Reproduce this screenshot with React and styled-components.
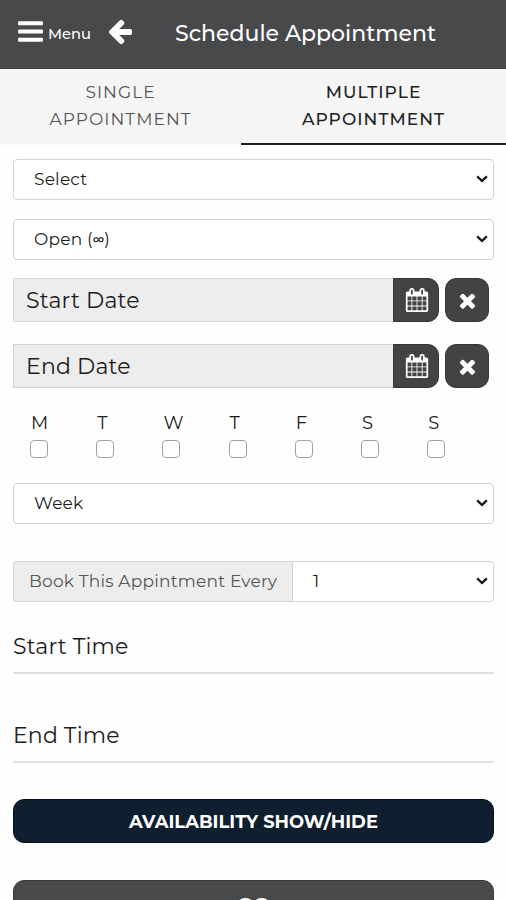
import React from "react";
import styled, { createGlobalStyle } from "styled-components";

const ICONS = {
  bars: "M1664 1344v128q0 26-19 45t-45 19h-1408q-26 0-45-19t-19-45v-128q0-26 19-45t45-19h1408q26 0 45 19t19 45zm0-512v128q0 26-19 45t-45 19h-1408q-26 0-45-19t-19-45v-128q0-26 19-45t45-19h1408q26 0 45 19t19 45zm0-512v128q0 26-19 45t-45 19h-1408q-26 0-45-19t-19-45v-128q0-26 19-45t45-19h1408q26 0 45 19t19 45z",
  arrow:
    "M1664 896v128q0 53-32.5 90.5t-84.5 37.5h-704l293 294q38 36 38 90t-38 90l-75 76q-37 37-90 37-52 0-91-37l-651-652q-37-37-37-90 0-52 37-91l651-650q38-38 91-38 52 0 90 38l75 74q38 38 38 91t-38 91l-293 293h704q52 0 84.5 37.5t32.5 90.5z",
  calendar:
    "M192 1664h288v-288h-288v288zm352 0h320v-288h-320v288zm-352-352h288v-320h-288v320zm352 0h320v-320h-320v320zm-352-384h288v-288h-288v288zm736 736h320v-288h-320v288zm-384-736h320v-288h-320v288zm768 736h288v-288h-288v288zm-384-352h320v-320h-320v320zm-352-864v-288q0-13-9.5-22.5t-22.5-9.5h-64q-13 0-22.5 9.5t-9.5 22.5v288q0 13 9.5 22.5t22.5 9.5h64q13 0 22.5-9.5t9.5-22.5zm736 864h288v-320h-288v320zm-384-384h320v-288h-320v288zm384 0h288v-288h-288v288zm32-480v-288q0-13-9.5-22.5t-22.5-9.5h-64q-13 0-22.5 9.5t-9.5 22.5v288q0 13 9.5 22.5t22.5 9.5h64q13 0 22.5-9.5t9.5-22.5zm384-64v1280q0 52-38 90t-90 38h-1408q-52 0-90-38t-38-90v-1280q0-52 38-90t90-38h128v-96q0-66 47-113t113-47h64q66 0 113 47t47 113v96h384v-96q0-66 47-113t113-47h64q66 0 113 47t47 113v96h128q52 0 90 38t38 90z",
  times:
    "M1490 1322q0 40-28 68l-136 136q-28 28-68 28t-68-28l-294-294-294 294q-28 28-68 28t-68-28l-136-136q-28-28-28-68t28-68l294-294-294-294q-28-28-28-68t28-68l136-136q28-28 68-28t68 28l294 294 294-294q28-28 68-28t68 28l136 136q28 28 28 68t-28 68l-294 294 294 294q28 28 28 68z",
};

const DAYS = ["M", "T", "W", "T", "F", "S", "S"];

function Icon({ name, size }) {
  return (
    <Glyph viewBox="0 0 1792 1792" width={size} height={size}>
      <path d={ICONS[name]} />
    </Glyph>
  );
}

function SelectField({ children, joined }) {
  return (
    <Select $joined={joined}>
      <span>{children}</span>
      <Chevron width="12" height="8" viewBox="0 0 12 8">
        <path d="M1.2 1.4 L6 6 L10.8 1.4" />
      </Chevron>
    </Select>
  );
}

function DateField({ label }) {
  return (
    <DateRow>
      <DateInput readOnly value={label} />
      <IconButton $attached aria-label="Pick date">
        <Icon name="calendar" size={24} />
      </IconButton>
      <IconButton aria-label="Clear date">
        <Icon name="times" size={23} />
      </IconButton>
    </DateRow>
  );
}

function App() {
  return (
    <Screen>
      <GlobalStyle />
      <Header>
        <MenuButton>
          <Icon name="bars" size={29} />
          <MenuText>Menu</MenuText>
        </MenuButton>
        <BackButton aria-label="Back">
          <Icon name="arrow" size={28} />
        </BackButton>
        <Title>Schedule Appointment</Title>
      </Header>
      <Tabs>
        <Tab>
          <span>Single</span>
          <span>Appointment</span>
        </Tab>
        <Tab $active>
          <span>Multiple</span>
          <span>Appointment</span>
        </Tab>
      </Tabs>
      <Form>
        <Selects>
          <SelectField>Select</SelectField>
          <SelectField>
            Open (<Infinity>∞</Infinity>)
          </SelectField>
        </Selects>
        <Dates>
          <DateField label="Start Date" />
          <DateField label="End Date" />
        </Dates>
        <Days>
          {DAYS.map((day, i) => (
            <Day key={i}>
              <DayName>{day}</DayName>
              <Checkbox type="checkbox" />
            </Day>
          ))}
        </Days>
        <SelectField>Week</SelectField>
        <Repeat>
          <Addon>Book This Appintment Every</Addon>
          <SelectField joined>1</SelectField>
        </Repeat>
        <Times>
          <TimeField>Start Time</TimeField>
          <TimeField>End Time</TimeField>
        </Times>
        <Actions>
          <Button $navy>AVAILABILITY SHOW/HIDE</Button>
          <Button $large>GO</Button>
        </Actions>
      </Form>
    </Screen>
  );
}

export default App;

const GlobalStyle = createGlobalStyle`
  * {
    box-sizing: border-box;
  }

  body {
    margin: 0;
    background: #fefefe;
    overflow: hidden;
  }

  body, button, input {
    font-family: Montserrat, Inter, sans-serif;
  }
`;

const Screen = styled.div`
  width: 100%;
  height: 900px;
  overflow: hidden;
  color: #1c1c1c;
`;

const Glyph = styled.svg`
  display: block;
  flex: none;
  fill: currentColor;
`;

const Header = styled.header`
  height: 69px;
  display: flex;
  align-items: center;
  padding: 0 0 4px 16px;
  background: #48494b;
  border-bottom: 1px solid #3b3c3e;
  color: #fff;
`;

const MenuButton = styled.button`
  display: flex;
  align-items: center;
  gap: 3px;
  width: 90px;
  padding: 0 0 1px;
  border: 0;
  background: none;
  color: inherit;
  font-size: 14.7px;
  font-weight: 500;
  white-space: nowrap;
`;

const MenuText = styled.span`
  padding-top: 5px;
`;

const BackButton = styled.button`
  padding: 0 0 2px;
  border: 0;
  background: none;
  color: inherit;
`;

const Title = styled.h1`
  margin: 0 0 0 41px;
  padding-top: 3px;
  font-size: 22px;
  font-weight: 500;
  white-space: nowrap;
`;

const Tabs = styled.nav`
  display: grid;
  grid-template-columns: 241px 1fr;
  height: 76px;
  background: #f5f5f5;
`;

const Tab = styled.button`
  display: flex;
  flex-direction: column;
  align-items: center;
  padding: 10px 0 0;
  border: 0;
  border-bottom: 2px solid ${(p) => (p.$active ? "#1d1e20" : "#f8f8f8")};
  background: none;
  color: ${(p) => (p.$active ? "#222" : "#555")};
  font-size: 17px;
  font-weight: ${(p) => (p.$active ? 500 : 400)};
  line-height: 27px;
  letter-spacing: 1.05px;
  text-transform: uppercase;
`;

const Form = styled.main`
  padding: 14px 12px 0 13px;
`;

const Selects = styled.div`
  display: flex;
  flex-direction: column;
  gap: 19px;
`;

const Select = styled.button`
  display: flex;
  align-items: center;
  justify-content: space-between;
  flex: ${(p) => (p.$joined ? 1 : "none")};
  width: 100%;
  height: 41px;
  padding: 0 5px 1px 20px;
  border: 1.5px solid #d3d3d3;
  border-radius: ${(p) => (p.$joined ? "0 4px 4px 0" : "4px")};
  background: #fff;
  color: #1c1c1c;
  font-size: 17px;
  letter-spacing: 0.2px;
`;

const Infinity = styled.span`
  font-size: 12px;
  font-weight: 600;
  vertical-align: 1px;
`;

const Chevron = styled.svg`
  flex: none;
  fill: none;
  stroke: #111;
  stroke-width: 2.3;
`;

const Dates = styled.div`
  display: flex;
  flex-direction: column;
  gap: 22px;
  margin-top: 18px;
`;

const DateRow = styled.div`
  display: flex;
  height: 44px;
`;

const DateInput = styled.input`
  width: 380px;
  padding: 0 12px;
  border: 1.5px solid #d3d3d3;
  border-right: 0;
  border-radius: 0;
  background: #ededed;
  color: #1c1c1c;
  font-size: 22px;
  letter-spacing: 0.2px;
`;

const IconButton = styled.button`
  display: flex;
  align-items: center;
  justify-content: center;
  width: ${(p) => (p.$attached ? 46 : 44)}px;
  margin-right: ${(p) => (p.$attached ? 6 : 0)}px;
  padding: 0 0 0 ${(p) => (p.$attached ? 2 : 0)}px;
  border: 1px solid #353638;
  border-radius: ${(p) => (p.$attached ? "0 11px 11px 0" : "11px")};
  background: #424345;
  color: #fff;
`;

const Days = styled.div`
  display: grid;
  grid-template-columns: repeat(7, 66.2px);
  height: 47px;
  margin: 24px 0;
  padding-left: 17px;
`;

const Day = styled.label`
  display: flex;
  flex-direction: column;
  gap: 5px;
  font-size: 18px;
  line-height: 23px;
`;

const DayName = styled.span`
  padding-left: 1px;
`;

const Checkbox = styled.input`
  appearance: none;
  width: 18px;
  height: 18px;
  margin: 0;
  border: 1.5px solid #a2a2a2;
  border-radius: 4px;
  background: #fff;
`;

const Repeat = styled.div`
  display: flex;
  margin-top: 37px;
`;

const Addon = styled.div`
  flex: none;
  width: 279px;
  height: 41px;
  padding-left: 15px;
  border: 1.5px solid #d3d3d3;
  border-right: 0;
  border-radius: 4px 0 0 4px;
  background: #ededed;
  color: #555;
  font-size: 17px;
  line-height: 38px;
  letter-spacing: 0.2px;
  white-space: nowrap;
`;

const Times = styled.div`
  display: grid;
  gap: 18px;
  margin-top: 1px;
`;

const TimeField = styled.div`
  height: 71px;
  padding-top: 28px;
  border-bottom: 2px solid #dfdfdf;
  color: #1c1c1c;
  font-size: 22px;
  line-height: 32px;
  letter-spacing: 0.15px;
`;

const Actions = styled.div`
  display: grid;
  gap: 37px;
  margin-top: 36px;
`;

const Button = styled.button`
  width: 100%;
  height: ${(p) => (p.$large ? 51 : 44)}px;
  border: 1.5px solid ${(p) => (p.$navy ? "#07111d" : "#38393b")};
  border-radius: 11px;
  background: ${(p) => (p.$navy ? "#101f2f" : "#48494b")};
  color: #fff;
  font-size: ${(p) => (p.$large ? 21 : 17.9)}px;
  font-weight: 700;
`;
